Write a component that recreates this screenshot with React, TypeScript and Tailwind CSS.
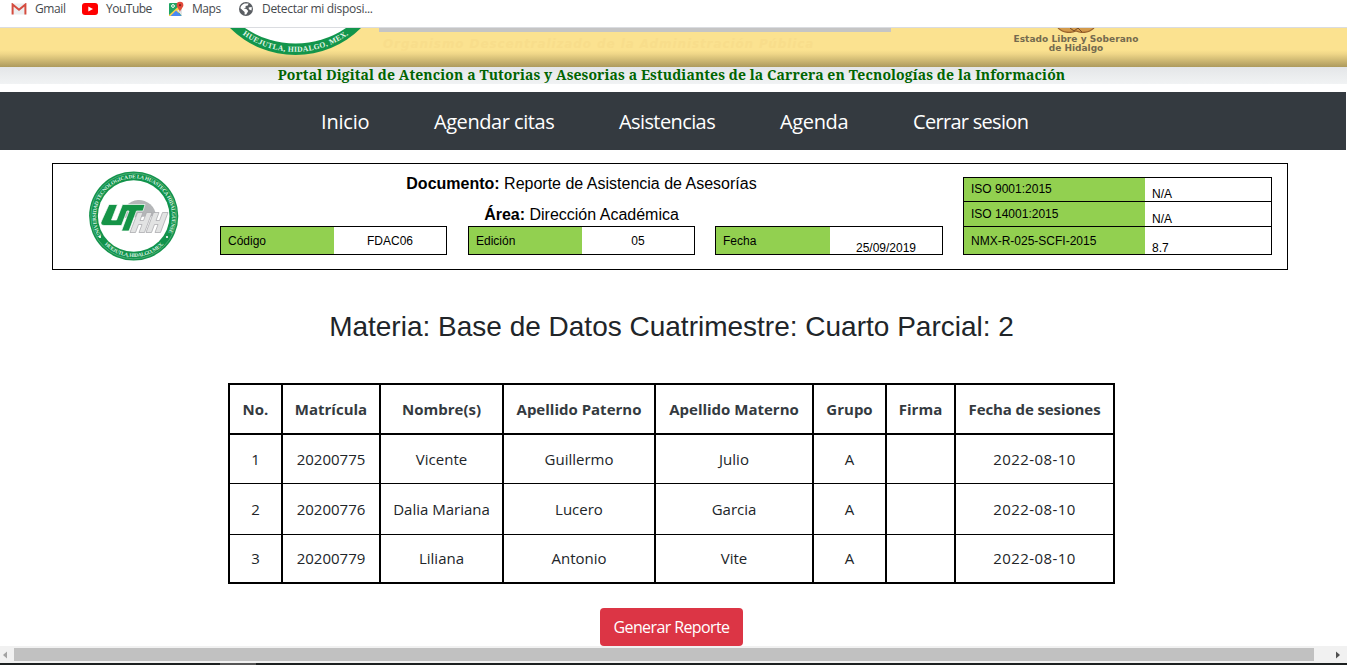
import React from "react";

function Seal() {
  return (
    <svg viewBox="0 0 90 90" className="block h-[90px] w-[90px]">
      <defs>
        <path id="ringTop" d="M12.4 64.8 A38 38 0 1 1 77.6 64.8" />
        <path id="ringBottom" d="M13.5 71.2 A41 41 0 0 0 76.5 71.2" />
      </defs>
      <circle cx="44.7" cy="45" r="44.6" fill="#12934b" />
      <circle cx="44.7" cy="45" r="42.8" fill="none" stroke="#7cc39a" strokeWidth="0.5" />
      <circle cx="44.7" cy="45" r="35.8" fill="#fff" />
      <text fontFamily="Liberation Serif, serif" fontWeight="700" fontSize="5.3" fill="#d9f0e2">
        <textPath href="#ringTop" textLength="156">UNIVERSIDAD TECNOLOGICA DE LA HUASTECA HIDALGUENSE</textPath>
      </text>
      <text fontFamily="Liberation Serif, serif" fontWeight="700" fontSize="5.3" fill="#d9f0e2">
        <textPath href="#ringBottom" startOffset="3" textLength="66">HUEJUTLA, HIDALGO, MEX.</textPath>
      </text>
      <circle cx="11" cy="66" r="1.1" fill="#fff" />
      <circle cx="78" cy="66" r="1.1" fill="#fff" />
      <path d="M33 47A17 17 0 0 1 67 45Z" fill="#b4b6b8" />
      <path d="M20 33.500H28.500L22.500 49H27.500L33.500 33.500H56L54 40H47.500L40 60H32.500L40 40H38L32.500 54.500H15Q10.500 54 12.500 50Z" fill="#159447" stroke="#fff" strokeWidth=".7" strokeLinejoin="round" />
      <path d="M48.500 41.500H54L51 49.500H54.500L57.500 41.500H63L55.500 61.500H50L53 53.500H49.500L46.500 61.500H41ZM64.500 41.500H70L67 49.500H70.500L73.500 41.500H79L71.500 61.500H66L69 53.500H65.500L62.500 61.500H57Z" fill="#e2e3e3" stroke="#a3a4a7" strokeWidth=".7" />
    </svg>
  );
}

function BannerSeal() {
  return (
    <svg viewBox="0 0 140 28" className="ml-[226px] block h-[28px] w-[140px] shrink-0 overflow-visible">
      <defs>
        <path id="bannerRing" d="M15 5.4 A90 90 0 0 0 124 5.4" />
      </defs>
      <path d="M4 0A93 93 0 0 0 135 0Z" fill="#12954b" />
      <path d="M19 0A89.800 89.800 0 0 0 120 0Z" fill="#fff" />
      <text fontFamily="Liberation Serif, serif" fontWeight="700" fontSize="7.6" fill="#e3f5e9">
        <textPath href="#bannerRing" startOffset="2" textLength="113" lengthAdjust="spacing">HUEJUTLA, HIDALGO, MEX.</textPath>
      </text>
    </svg>
  );
}

function GmailIcon() {
  return (
    <svg viewBox="0 0 16 12" className="h-[12px] w-[16px]">
      <rect x="1" y=".5" width="14" height="11" fill="#eceff1" />
      <path d="M1.6 11.5V1.5L8 6.8l6.4-5.3v10" fill="none" stroke="#d54c3f" strokeWidth="2" />
    </svg>
  );
}

function YouTubeIcon() {
  return (
    <svg viewBox="0 0 16 12" className="h-[12px] w-[16px]">
      <rect width="16" height="12" rx="3" fill="#f00" />
      <path d="M6.3 3.4 11 6 6.3 8.6Z" fill="#fff" />
    </svg>
  );
}

function MapsIcon() {
  return (
    <svg viewBox="0 0 15 16" className="h-[16px] w-[15px]">
      <rect x="0" y="2" width="13" height="13" rx="1" fill="#1fa463" />
      <path d="M0 14 11 4h2v4L6.5 15H0Z" fill="#fbd04b" />
      <path d="M1.5 15 7 9.5 12.5 15Z" fill="#4a89f3" />
      <path d="M8.2 9.2 12.8 15h.2V8Z" fill="#e3e5e8" />
      <circle cx="4" cy="5" r="1.4" fill="none" stroke="#fff" />
      <path d="M11 .8a3.4 3.4 0 0 1 3.4 3.4C14.4 6.4 11.6 8 11 11c-.6-3-3.4-4.6-3.4-6.8A3.4 3.4 0 0 1 11 .8Z" fill="#e24a3b" />
      <circle cx="11" cy="4.2" r="1.1" fill="#7d241c" />
    </svg>
  );
}

function GlobeIcon() {
  return (
    <svg viewBox="0 0 14 14" className="h-[14px] w-[14px]">
      <circle cx="7" cy="7" r="7" fill="#5a5e63" />
      <path d="M5.6 1.4h4L8.8 3.6 6.6 4v1.8L4.7 6.6l2.7.4 1.8 2-.8 1.5-1.2 2.1-1.6-.2V10L3.4 8.1 1.4 6.2c.3-2.4 2-4.2 4.2-4.8ZM9.6 5.5l3-.6c.3 1.5.1 2.6-.3 3.5L9.9 7.3Z" fill="#fff" />
    </svg>
  );
}

const bookmark = "font-['Open_Sans',sans-serif] text-[12px] leading-[18px] text-[#45494d] whitespace-nowrap";

function BookmarksBar() {
  return (
    <div className="flex h-[28px] shrink-0 items-start border-b border-[#dadce0] bg-white pl-[11px]">
      <div className="flex h-[18px] w-[71px] items-center gap-[8px]">
        <GmailIcon />
        <span className={`${bookmark} tracking-[-0.4px]`}>Gmail</span>
      </div>
      <div className="flex h-[18px] w-[87px] items-center gap-[8px]">
        <YouTubeIcon />
        <span className={`${bookmark} tracking-[-0.5px]`}>YouTube</span>
      </div>
      <div className="flex h-[18px] w-[70px] items-center gap-[8px]">
        <MapsIcon />
        <span className={`${bookmark} tracking-[-0.45px]`}>Maps</span>
      </div>
      <div className="flex h-[18px] items-center gap-[9px]">
        <GlobeIcon />
        <span className={`${bookmark} tracking-[-0.3px]`}>Detectar mi disposi...</span>
      </div>
    </div>
  );
}

function Banner() {
  return (
    <div className="flex h-[39px] shrink-0 items-start bg-[linear-gradient(to_bottom,#fbe290_0px,#fbe290_22px,#efd688_26px,#ad9a5d_39px)]">
      <BannerSeal />
      <div className="ml-[13px] w-[512px] shrink-0">
        <div className="h-[4px] bg-[#c5c5c5]" />
        <p className="mt-[4px] pl-[4px] font-['DejaVu_Sans',sans-serif] text-[12px] leading-[17px] font-bold tracking-[0.9px] whitespace-nowrap text-[#f8dd8b] italic">
          Organismo Descentralizado de la Administración Pública
        </p>
      </div>
      <div className="ml-[112px] flex w-[146px] flex-col items-center font-['DejaVu_Sans',sans-serif] text-[9px] leading-[10px] font-bold text-[#746a4e]">
        <svg viewBox="0 0 40 5" className="h-[5px] w-[40px] shrink-0">
          <path d="M2 0Q10 7 20 3 30 7 38 0" fill="#d39a4b" stroke="#98622c" strokeWidth="1.2" />
          <path d="M14 0 18 3 22 0 26 4" fill="none" stroke="#754a25" />
        </svg>
        <span className="pt-px tracking-[0.05px] whitespace-nowrap">Estado Libre y Soberano</span>
        <span className="-mt-px">de Hidalgo</span>
      </div>
    </div>
  );
}

const links = [
  { label: "Inicio", style: "ml-[321px] w-[113px] tracking-[-0.2px]" },
  { label: "Agendar citas", style: "w-[185px] tracking-[-0.45px]" },
  { label: "Asistencias", style: "w-[161px] tracking-[-0.6px]" },
  { label: "Agenda", style: "w-[133px] tracking-[-0.35px]" },
  { label: "Cerrar sesion", style: "tracking-[-0.7px]" },
];

function NavBar() {
  return (
    <nav className="mt-[8px] mr-px flex h-[58px] shrink-0 items-center bg-[#343a40] pt-[2px] font-['Open_Sans',sans-serif] text-[20px] leading-[30px] text-white">
      {links.map((l) => (
        <a key={l.label} className={`whitespace-nowrap ${l.style}`}>{l.label}</a>
      ))}
    </nav>
  );
}

function Field({ label, value, low }: { label: string; value: string; low?: boolean }) {
  return (
    <div className={`flex h-[29px] border border-black ${low ? "w-[228px]" : "w-[227px]"}`}>
      <div className={`flex items-center bg-[#92d050] pl-[7px] ${low ? "w-[114px]" : "w-[113px]"}`}>{label}</div>
      <div className={`flex flex-1 justify-center ${low ? "items-end leading-[12px]" : "items-center"}`}>{value}</div>
    </div>
  );
}

const norms = [
  { name: "ISO 9001:2015", value: "N/A", style: "h-[24px] border-b", label: "pb-px", pad: "pt-[8px]" },
  { name: "ISO 14001:2015", value: "N/A", style: "h-[25px] border-b", label: "", pad: "pt-[9px]" },
  { name: "NMX-R-025-SCFI-2015", value: "8.7", style: "h-[27px]", label: "", pad: "pt-[13px]" },
];

function DocumentHeader() {
  return (
    <section className="mt-[13px] ml-[52px] flex h-[107px] w-[1236px] shrink-0 border border-black font-['Liberation_Sans',Arial,sans-serif] text-[12px] text-black">
      <div className="w-[167px] pt-[7px] pl-[36px]">
        <Seal />
      </div>
      <div className="w-[723px] pt-[4px]">
        <div className="text-center text-[16px] leading-[31px]">
          <p><b>Documento:</b> Reporte de Asistencia de Asesorías</p>
          <p><b>Área:</b> Dirección Académica</p>
        </div>
        <div className="-mt-[4px] grid grid-cols-[248px_247px_228px]">
          <Field label="Código" value="FDAC06" />
          <Field label="Edición" value="05" />
          <Field label="Fecha" value="25/09/2019" low />
        </div>
      </div>
      <div className="mt-[13px] ml-[20px] h-[78px] w-[309px] border border-black">
        {norms.map((n) => (
          <div key={n.name} className={`flex border-black ${n.style}`}>
            <div className={`flex w-[181px] items-center bg-[#92d050] pl-[7px] ${n.label}`}>{n.name}</div>
            <div className={`pl-[7px] leading-[16px] ${n.pad}`}>{n.value}</div>
          </div>
        ))}
      </div>
    </section>
  );
}

const columns = [
  { title: "No.", width: "w-[53px]" },
  { title: "Matrícula", width: "w-[98px]" },
  { title: "Nombre(s)", width: "w-[123px]" },
  { title: "Apellido Paterno", width: "w-[152px]" },
  { title: "Apellido Materno", width: "w-[158px]" },
  { title: "Grupo", width: "w-[73px]" },
  { title: "Firma", width: "w-[69px]" },
  { title: "Fecha de sesiones", width: "w-[157px]" },
];

const rows = [
  ["1", "20200775", "Vicente", "Guillermo", "Julio", "A", "", "2022-08-10"],
  ["2", "20200776", "Dalia Mariana", "Lucero", "Garcia", "A", "", "2022-08-10"],
  ["3", "20200779", "Liliana", "Antonio", "Vite", "A", "", "2022-08-10"],
];

const rowStyles = ["h-[49px] border-b", "h-[51px] border-b", "h-[47px]"];
const cellStyles = ["pt-px", "", "pb-px"];

function AttendanceTable() {
  return (
    <div className="mt-[40px] ml-[228px] h-[201px] w-[887px] shrink-0 border-2 border-black font-['Open_Sans',sans-serif] text-[15px] text-[#212529]">
      <div className="flex h-[50px] border-b-2 border-black font-bold text-[#343a40]">
        {columns.map((c) => (
          <div key={c.title} className={`flex items-center justify-center border-r-2 border-black whitespace-nowrap last:border-r-0 last:tracking-[-0.1px] ${c.width}`}>
            {c.title}
          </div>
        ))}
      </div>
      {rows.map((r, i) => (
        <div key={r[1]} className={`flex border-black ${rowStyles[i]}`}>
          {r.map((value, j) => (
            <div key={j} className={`flex items-center justify-center border-r-2 border-black whitespace-nowrap last:border-r-0 last:tracking-[0.4px] ${cellStyles[i]} ${columns[j].width}`}>
              {value}
            </div>
          ))}
        </div>
      ))}
    </div>
  );
}

function ScrollBar() {
  return (
    <div className="h-[19px] shrink-0">
      <div className="flex h-[17px] items-center bg-[#f1f1f1]">
        <svg viewBox="0 0 14 14" className="h-[14px] w-[14px]">
          <path d="M3 7 7 3.5V10.5Z" fill="#a3a3a3" />
        </svg>
        <div className="h-[13px] w-[1300px] bg-[#c1c1c1]" />
        <svg viewBox="0 0 14 14" className="ml-[15px] h-[14px] w-[14px]">
          <path d="M11 7 7 3.5V10.5Z" fill="#505050" />
        </svg>
      </div>
      <div className="h-[2px] bg-[#1c2020] pl-[220px]">
        <div className="h-[2px] w-[36px] bg-[#555]" />
      </div>
    </div>
  );
}

export default function App() {
  return (
    <div className="flex h-[665px] w-[1347px] flex-col overflow-hidden bg-white">
      <BookmarksBar />
      <Banner />
      <h1 className="h-[17px] shrink-0 bg-gradient-to-b from-[#e4e6e8] to-[#f1f3f4] pr-[4px] text-center font-['Noto_Serif',Gelasio,Georgia,'DejaVu_Serif',serif] text-[14px] leading-[16px] font-bold tracking-[0.1px] whitespace-nowrap text-[#006400]">
        Portal Digital de Atencion a Tutorias y Asesorias a Estudiantes de la Carrera en Tecnologías de la Información
      </h1>
      <NavBar />
      <DocumentHeader />
      <h2 className="mt-[40px] -mb-px h-[34px] shrink-0 pr-[4px] text-center font-['Liberation_Sans',Arial,sans-serif] text-[28px] leading-[34px] whitespace-nowrap text-[#212529]">
        Materia: Base de Datos Cuatrimestre: Cuarto Parcial: 2
      </h2>
      <AttendanceTable />
      <div className="mt-[24px] flex h-[38px] shrink-0 pl-[600px]">
        <button className="h-[38px] w-[143px] rounded-[4px] bg-[#dc3545] font-['Open_Sans',sans-serif] text-[16px] tracking-[-0.6px] whitespace-nowrap text-white">
          Generar Reporte
        </button>
      </div>
      <ScrollBar />
    </div>
  );
}
